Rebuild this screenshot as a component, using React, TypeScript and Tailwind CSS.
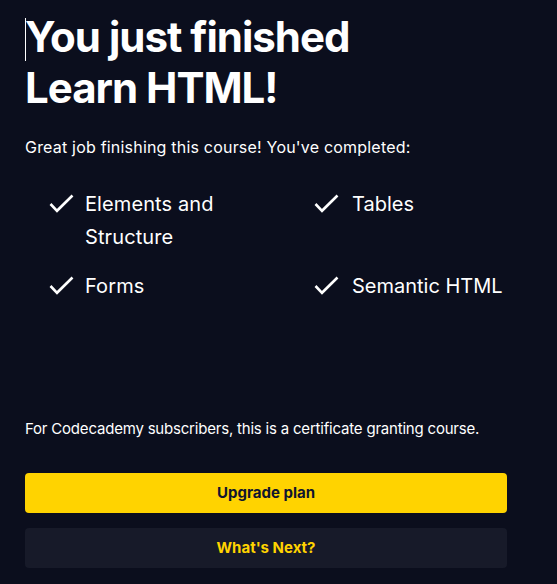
const topics = [
  { left: "Elements and Structure", right: "Tables" },
  { left: "Forms", right: "Semantic HTML" },
]

function Tick() {
  return (
    <svg width="25" height="20" viewBox="0 0 25 20" className="shrink-0 mt-[6px]" fill="none">
      <polyline points="1.5,10 8,16.8 23.5,1.5" stroke="white" strokeWidth="2.6" strokeLinejoin="miter" />
    </svg>
  )
}

export default function App() {
  return (
    <div
      className="w-[557px] h-[584px] bg-[#0b0e1d] text-white overflow-hidden"
      style={{ fontFamily: "Inter, 'Noto Sans', sans-serif" }}
    >
      <div className="pl-[25px] pr-[50px] pt-[11px]">
        <h1 className="relative text-[42px] leading-[51px] font-bold tracking-[-1px]">
          <span className="absolute left-0 top-[7px] h-[43px] w-px bg-white" />
          You just finished
          <br />
          Learn HTML!
        </h1>

        <p className="mt-[23px] text-[16px] leading-[22px] tracking-[0.2px]">
          Great job finishing this course! You've completed:
        </p>

        <div className="mt-[30px] grid grid-cols-[265px_1fr] gap-y-[16px] pl-[24px]">
          {topics.map((row) => (
            <div key={row.left} className="contents">
              <div className="flex items-start gap-[11px] pr-[40px]">
                <Tick />
                <span className="text-[20px] leading-[33px] tracking-[0.1px]">{row.left}</span>
              </div>
              <div className="flex items-start gap-[13px]">
                <Tick />
                <span className="text-[20px] leading-[33px]">{row.right}</span>
              </div>
            </div>
          ))}
        </div>

        <p className="mt-[116px] text-[15px] leading-[20px] tracking-[-0.2px]">
          For Codecademy subscribers, this is a certificate granting course.
        </p>

        <div className="mt-[34px] flex flex-col gap-[15px]">
          <button className="h-[40px] w-full rounded-[4px] bg-[#ffd300] text-[15px] font-bold text-[#10162f]">
            Upgrade plan
          </button>
          <button className="h-[40px] w-full rounded-[4px] bg-[#171a29] text-[15px] font-bold text-[#ffd300]">
            What's Next?
          </button>
        </div>
      </div>
    </div>
  )
}
